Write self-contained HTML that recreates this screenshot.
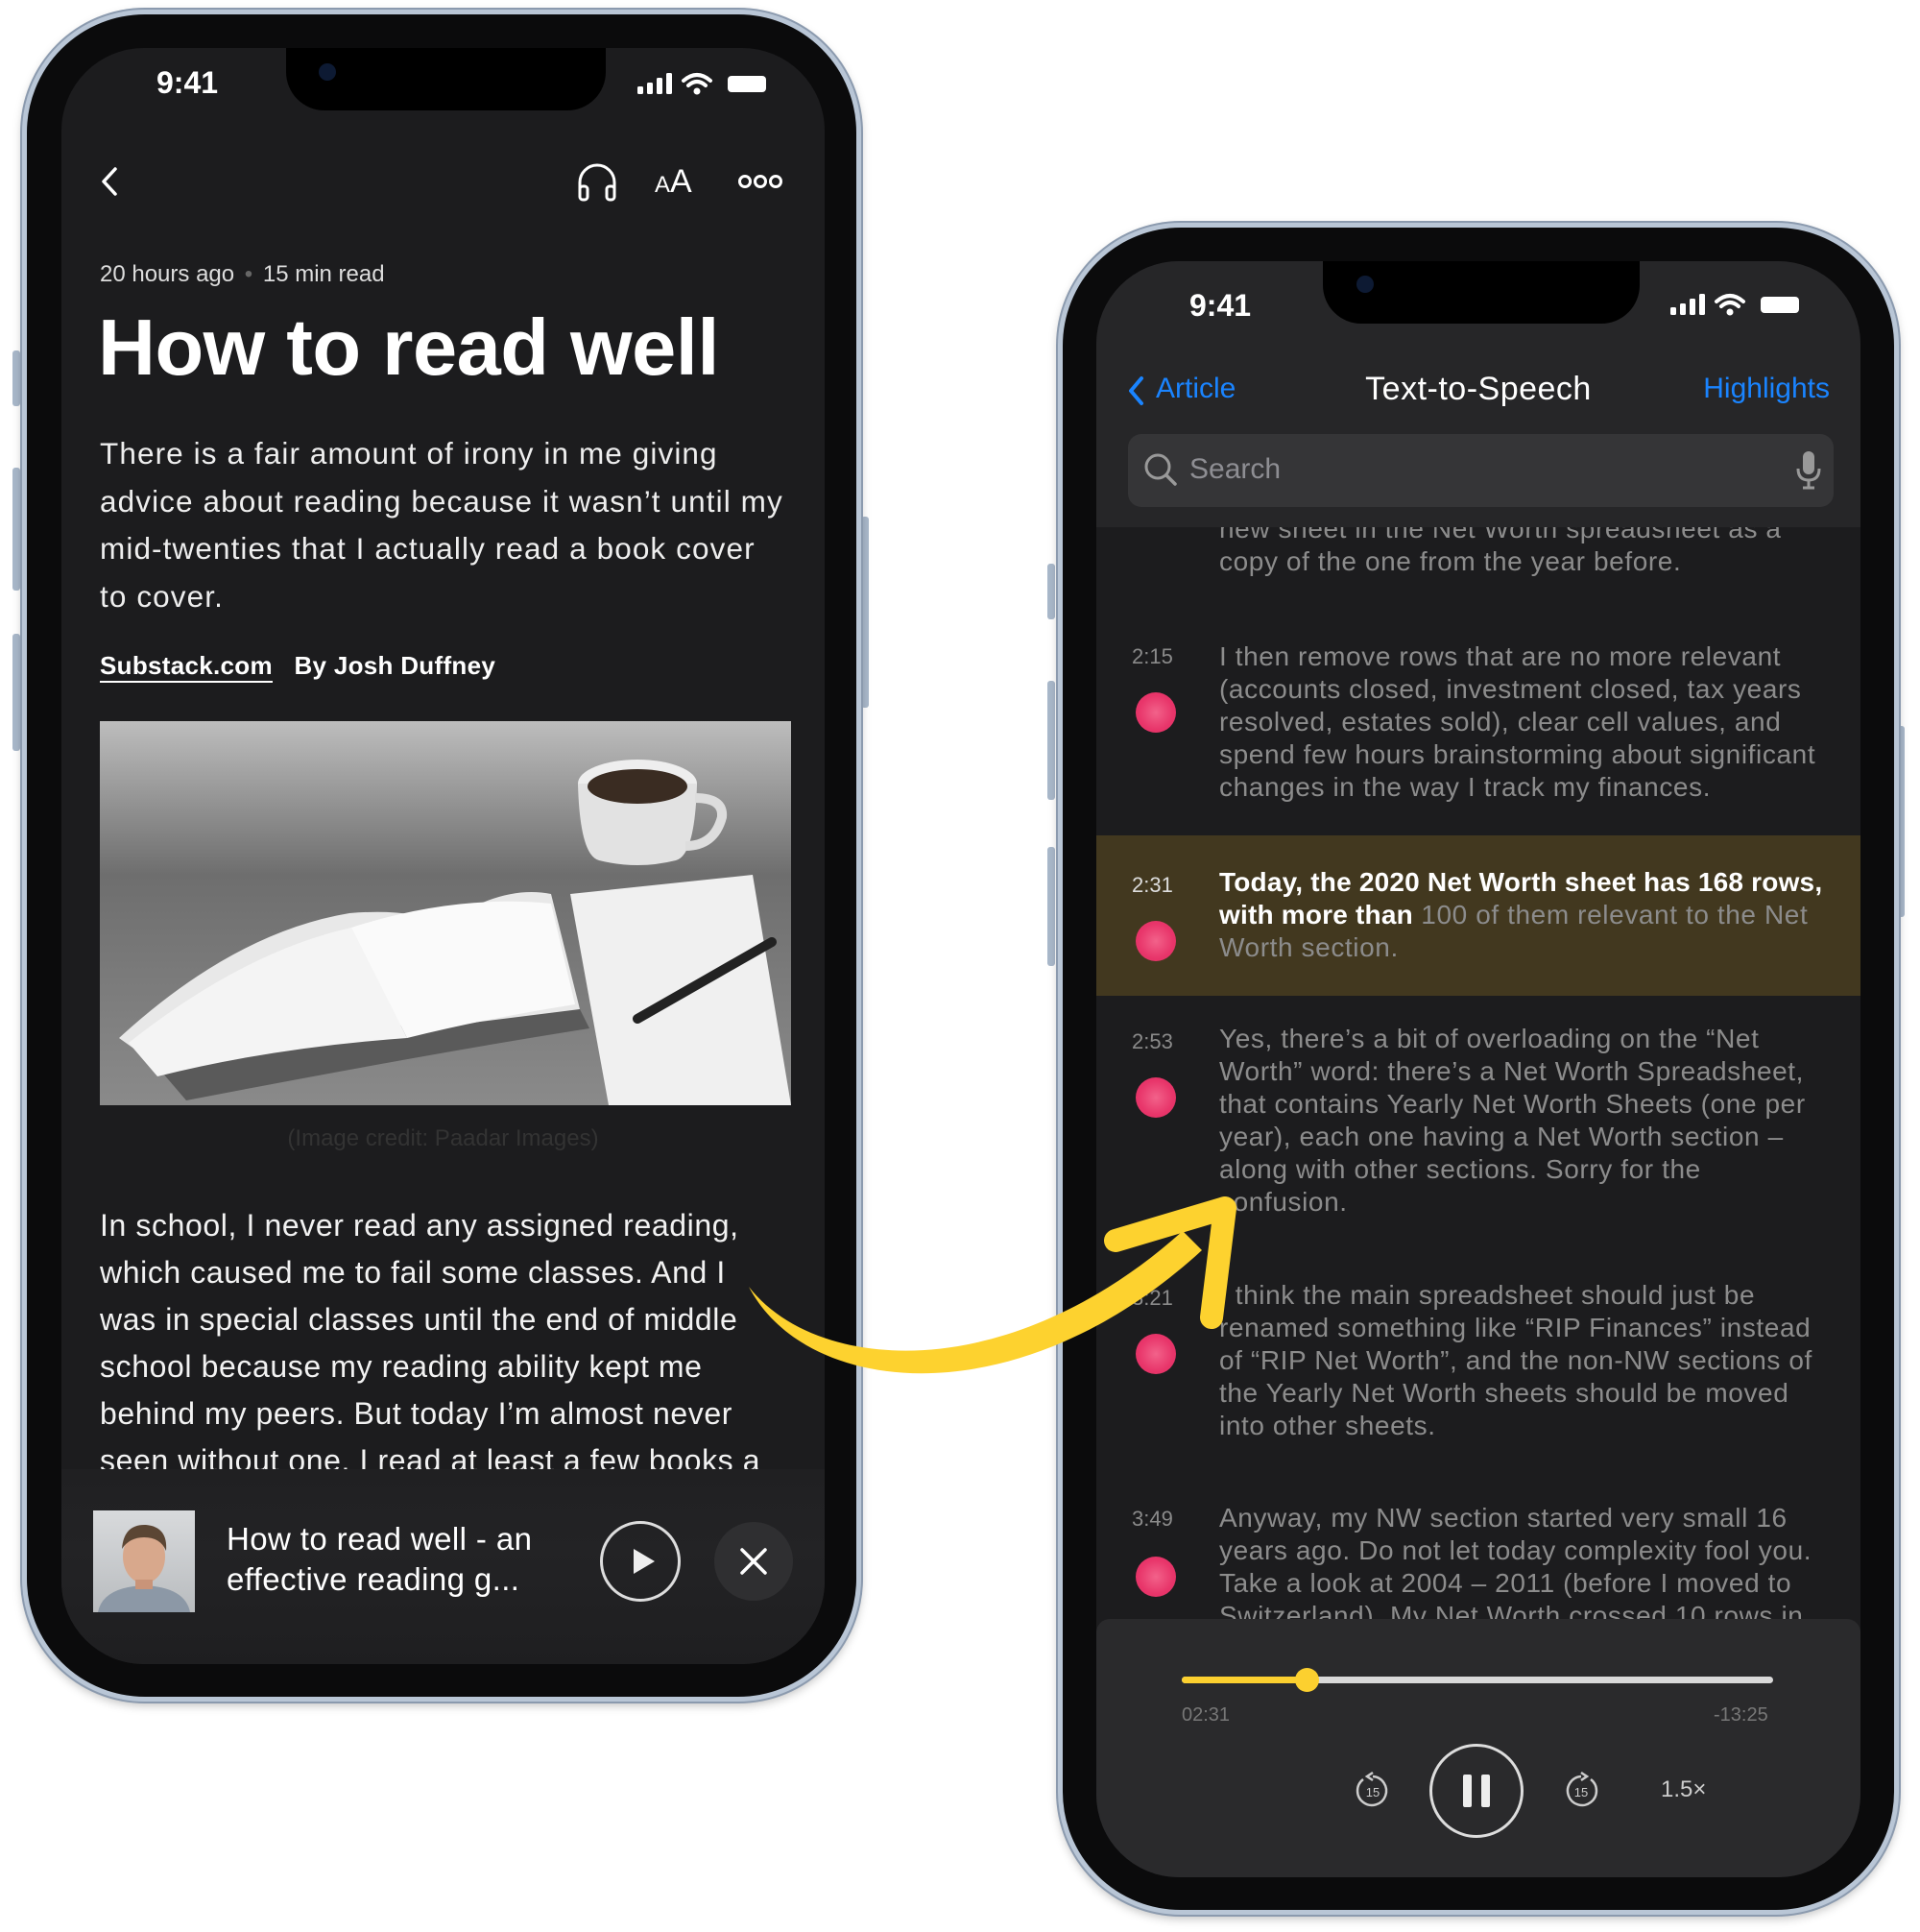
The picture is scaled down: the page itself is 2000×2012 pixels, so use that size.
<!DOCTYPE html>
<html><head><meta charset="utf-8"><style>
*{margin:0;padding:0;box-sizing:border-box}
body{width:2000px;height:2012px;background:#fff;position:relative;overflow:hidden;font-family:"Liberation Sans",sans-serif}
.abs{position:absolute}
.phone{position:absolute;border-radius:128px;background:#0b0b0c;border:5px solid #b9c6d6;box-shadow:0 0 0 2px #8b9aae,0 4px 10px rgba(0,0,0,.25)}
.screen{position:absolute;border-radius:86px;overflow:hidden;background:#1c1c1e}
.btn{position:absolute;width:8px;background:#a9b8ca;border-radius:3px}
.l{position:absolute;white-space:nowrap}
.dot{position:absolute;width:42px;height:42px;border-radius:50%;background:radial-gradient(circle,#f2628a 0,#e8356a 60%,#e02e63 100%)}
.ts{position:absolute;font-size:22px;color:#8a8a8a}
.rt{position:absolute;font-size:28px;letter-spacing:0.6px;color:#8c8c8c;line-height:34px;white-space:nowrap}
</style></head><body>

<!-- LEFT PHONE -->
<div class="btn" style="left:13px;top:365px;height:58px"></div>
<div class="btn" style="left:13px;top:487px;height:128px"></div>
<div class="btn" style="left:13px;top:660px;height:122px"></div>
<div class="btn" style="left:897px;top:538px;height:199px"></div>
<div class="phone" style="left:23px;top:10px;width:874px;height:1762px"></div>
<div class="screen" style="left:64px;top:50px;width:795px;height:1683px">
  <div class="abs" style="left:234px;top:-10px;width:333px;height:75px;background:#000;border-radius:0 0 40px 40px"></div>
  <div class="abs" style="left:268px;top:16px;width:18px;height:18px;border-radius:50%;background:#0d1a33"></div>
  <div class="l" style="left:99px;top:18px;font-size:32px;font-weight:bold;color:#fff">9:41</div>
  <svg class="abs" style="left:598px;top:24px" width="140" height="28" viewBox="0 0 140 28">
    <rect x="2" y="16" width="6" height="8" rx="1.5" fill="#fff"/><rect x="12" y="12" width="6" height="12" rx="1.5" fill="#fff"/><rect x="22" y="7" width="6" height="17" rx="1.5" fill="#fff"/><rect x="32" y="2" width="6" height="22" rx="1.5" fill="#fff"/>
    <path d="M50 10 Q64 -2 78 10" stroke="#fff" stroke-width="4" fill="none" stroke-linecap="round"/><path d="M55 15 Q64 7 73 15" stroke="#fff" stroke-width="4" fill="none" stroke-linecap="round"/><circle cx="64" cy="21" r="3.5" fill="#fff"/>
    <rect x="96" y="5" width="40" height="17" rx="4" fill="#fff"/>
  </svg>
  <svg class="abs" style="left:36px;top:120px" width="30" height="40"><path d="M20 6 L8 19 L20 32" stroke="#fff" stroke-width="3.5" fill="none" stroke-linecap="round" stroke-linejoin="round"/></svg>
  <svg class="abs" style="left:536px;top:120px" width="44" height="42" viewBox="0 0 44 42"><path d="M4 30 V20 A18 18 0 0 1 40 20 V30" stroke="#fff" stroke-width="3" fill="none"/><rect x="4" y="24" width="8" height="14" rx="3" stroke="#fff" stroke-width="3" fill="none"/><rect x="32" y="24" width="8" height="14" rx="3" stroke="#fff" stroke-width="3" fill="none"/></svg>
  <div class="l" style="left:618px;top:120px;color:#fff;font-size:24px">A<span style="font-size:34px">A</span></div>
  <svg class="abs" style="left:704px;top:130px" width="48" height="18"><circle cx="8" cy="9" r="5.5" stroke="#fff" stroke-width="3" fill="none"/><circle cx="24" cy="9" r="5.5" stroke="#fff" stroke-width="3" fill="none"/><circle cx="40" cy="9" r="5.5" stroke="#fff" stroke-width="3" fill="none"/></svg>
  <div class="abs" style="left:0;top:0;width:795px;height:1480px;overflow:hidden">
    <div class="l" style="left:40px;top:222px;font-size:24px;color:#ddd">20 hours ago <span style="color:#666;margin:0 4px">•</span> 15 min read</div>
    <div class="l" style="left:38px;top:264px;font-size:83px;font-weight:bold;color:#fff;letter-spacing:-0.5px">How to read well</div>
    <div style="position:absolute;left:40px;top:398px;font-size:31.5px;letter-spacing:1.1px;line-height:49.5px;color:#eee">
      <div class="l" style="position:static">There is a fair amount of irony in me giving</div>
      <div class="l" style="position:static">advice about reading because it wasn’t until my</div>
      <div class="l" style="position:static">mid-twenties that I actually read a book cover</div>
      <div class="l" style="position:static">to cover.</div>
    </div>
    <div class="l" style="left:40px;top:628px;font-size:26px;font-weight:bold;color:#fff;letter-spacing:0.3px"><span style="border-bottom:2px solid #fff;padding-bottom:1px">Substack.com</span>&nbsp;&nbsp;&nbsp;By Josh Duffney</div>
    <svg class="abs" style="left:40px;top:701px" width="720" height="400" viewBox="0 0 720 400">
      <defs><linearGradient id="g1" x1="0" y1="0" x2="0" y2="1"><stop offset="0" stop-color="#bdbdbd"/><stop offset=".4" stop-color="#6e6e6e"/><stop offset="1" stop-color="#8a8a8a"/></linearGradient></defs>
      <rect width="720" height="400" fill="url(#g1)"/>
      <path d="M20 330 Q140 220 260 200 Q320 195 360 210 Q420 170 470 180 L500 300 Q420 330 320 345 Q200 360 90 380 Z" fill="#e8e8e8"/>
      <path d="M60 360 Q200 300 340 320 L500 300 L510 320 Q350 345 90 395 Z" fill="#5a5a5a"/>
      <path d="M30 335 Q150 240 262 215 L320 330 Q180 340 60 370 Z" fill="#f4f4f4"/>
      <path d="M262 215 Q370 180 470 190 L495 295 Q400 310 320 330 Z" fill="#fafafa"/>
      <path d="M490 180 L680 160 L720 400 L530 400 Z" fill="#f0f0f0"/>
      <path d="M560 310 L700 230" stroke="#222" stroke-width="10" stroke-linecap="round"/>
      <ellipse cx="560" cy="65" rx="62" ry="25" fill="#eee"/>
      <path d="M498 65 Q500 140 520 145 Q560 155 600 145 Q620 140 622 65 Z" fill="#e2e2e2"/>
      <ellipse cx="560" cy="68" rx="52" ry="18" fill="#3a2c22"/>
      <path d="M620 80 Q650 80 648 100 Q640 130 610 130" stroke="#ddd" stroke-width="10" fill="none"/>
    </svg>
    <div class="l" style="left:0;width:795px;text-align:center;top:1122px;font-size:24px;color:#333">(Image credit: Paadar Images)</div>
    <div style="position:absolute;left:40px;top:1202px;font-size:32px;letter-spacing:0.6px;line-height:49px;color:#f2f2f2">
      <div class="l" style="position:static">In school, I never read any assigned reading,</div>
      <div class="l" style="position:static">which caused me to fail some classes. And I</div>
      <div class="l" style="position:static">was in special classes until the end of middle</div>
      <div class="l" style="position:static">school because my reading ability kept me</div>
      <div class="l" style="position:static">behind my peers. But today I’m almost never</div>
      <div class="l" style="position:static">seen without one. I read at least a few books a</div>
    </div>
  </div>
  <div class="abs" style="left:0;top:1480px;width:795px;height:210px;background:linear-gradient(#202022,#232325 40%,#1e1e20)"></div>
  <div class="abs" style="left:33px;top:1523px;width:106px;height:106px;background:linear-gradient(#d8dadc,#b9bcbf)">
    <svg width="106" height="106" viewBox="0 0 106 106"><path d="M5 106 Q10 80 53 78 Q96 80 101 106 Z" fill="#8c98a6"/><ellipse cx="53" cy="48" rx="22" ry="28" fill="#d8a88c"/><path d="M30 40 Q32 14 55 15 Q78 17 76 42 Q70 28 53 28 Q38 28 30 40Z" fill="#5b4634"/><rect x="44" y="72" width="18" height="10" fill="#c99479"/></svg>
  </div>
  <div class="l" style="left:172px;top:1532px;font-size:33px;letter-spacing:0.4px;line-height:42px;color:#fff">How to read well - an<br>effective reading g...</div>
  <div class="abs" style="left:561px;top:1534px;width:84px;height:84px;border:3px solid #ddd;border-radius:50%"></div>
  <svg class="abs" style="left:592px;top:1561px" width="30" height="30"><path d="M4 2 L26 15 L4 28 Z" fill="#eee"/></svg>
  <div class="abs" style="left:680px;top:1535px;width:82px;height:82px;background:#2f2f31;border-radius:50%"></div>
  <svg class="abs" style="left:705px;top:1560px" width="32" height="32"><path d="M4 4 L28 28 M28 4 L4 28" stroke="#fff" stroke-width="3.5" stroke-linecap="round"/></svg>
</div>

<!-- RIGHT PHONE -->
<div class="btn" style="left:1091px;top:587px;height:58px"></div>
<div class="btn" style="left:1091px;top:709px;height:124px"></div>
<div class="btn" style="left:1091px;top:882px;height:124px"></div>
<div class="btn" style="left:1976px;top:756px;height:199px"></div>
<div class="phone" style="left:1102px;top:232px;width:876px;height:1762px"></div>
<div class="screen" style="left:1142px;top:272px;width:796px;height:1683px;background:#1c1c1e">
  <div class="abs" style="left:0;top:0;width:796px;height:277px;background:#262628"></div>
  <div class="abs" style="left:236px;top:-10px;width:330px;height:75px;background:#000;border-radius:0 0 40px 40px"></div>
  <div class="abs" style="left:271px;top:15px;width:18px;height:18px;border-radius:50%;background:#0d1a33"></div>
  <div class="l" style="left:97px;top:28px;font-size:32px;font-weight:bold;color:#fff">9:41</div>
  <svg class="abs" style="left:596px;top:32px" width="140" height="28" viewBox="0 0 140 28">
    <rect x="2" y="16" width="6" height="8" rx="1.5" fill="#fff"/><rect x="12" y="12" width="6" height="12" rx="1.5" fill="#fff"/><rect x="22" y="7" width="6" height="17" rx="1.5" fill="#fff"/><rect x="32" y="2" width="6" height="22" rx="1.5" fill="#fff"/>
    <path d="M50 10 Q64 -2 78 10" stroke="#fff" stroke-width="4" fill="none" stroke-linecap="round"/><path d="M55 15 Q64 7 73 15" stroke="#fff" stroke-width="4" fill="none" stroke-linecap="round"/><circle cx="64" cy="21" r="3.5" fill="#fff"/>
    <rect x="96" y="5" width="40" height="17" rx="4" fill="#fff"/>
  </svg>
  <svg class="abs" style="left:30px;top:118px" width="24" height="34"><path d="M17 4 L6 17 L17 30" stroke="#1a84ff" stroke-width="4" fill="none" stroke-linecap="round" stroke-linejoin="round"/></svg>
  <div class="l" style="left:62px;top:116px;font-size:30px;color:#1a84ff">Article</div>
  <div class="l" style="left:0;width:796px;text-align:center;top:114px;font-size:34px;letter-spacing:0.5px;color:#fff">Text-to-Speech</div>
  <div class="l" style="right:32px;top:116px;font-size:30px;color:#1a84ff">Highlights</div>
  <div class="abs" style="left:33px;top:180px;width:735px;height:76px;background:#353537;border-radius:14px"></div>
  <svg class="abs" style="left:48px;top:198px" width="40" height="40"><circle cx="16" cy="16" r="12" stroke="#999" stroke-width="3" fill="none"/><path d="M25 25 L34 34" stroke="#999" stroke-width="3.5" stroke-linecap="round"/></svg>
  <div class="l" style="left:97px;top:200px;font-size:30px;color:#8e8e93">Search</div>
  <svg class="abs" style="left:727px;top:196px" width="30" height="44"><rect x="9" y="2" width="12" height="24" rx="6" fill="#999"/><path d="M4 20 Q4 32 15 32 Q26 32 26 20 M15 32 V40 M9 40 H21" stroke="#999" stroke-width="3" fill="none"/></svg>
  <div class="abs" style="left:0;top:277px;width:796px;height:1137px;overflow:hidden">
    <div class="abs" style="left:0;top:321px;width:796px;height:167px;background:#42381f"></div>
    <div class="rt" style="left:128px;top:-15px">new sheet in the Net Worth spreadsheet as a<br>copy of the one from the year before.</div>

    <div class="ts" style="left:37px;top:122px">2:15</div><div class="dot" style="left:41px;top:172px"></div>
    <div class="rt" style="left:128px;top:118px">I then remove rows that are no more relevant<br>(accounts closed, investment closed, tax years<br>resolved, estates sold), clear cell values, and<br>spend few hours brainstorming about significant<br>changes in the way I track my finances.</div>

    <div class="ts" style="left:37px;top:360px;color:#ddd">2:31</div><div class="dot" style="left:41px;top:410px"></div>
    <div class="rt" style="left:128px;top:353px"><b style="color:#fff;letter-spacing:0.2px">Today, the 2020 Net Worth sheet has 168 rows,<br>with more than</b> 100 of them relevant to the Net<br>Worth section.</div>

    <div class="ts" style="left:37px;top:523px">2:53</div><div class="dot" style="left:41px;top:573px"></div>
    <div class="rt" style="left:128px;top:516px">Yes, there’s a bit of overloading on the “Net<br>Worth” word: there’s a Net Worth Spreadsheet,<br>that contains Yearly Net Worth Sheets (one per<br>year), each one having a Net Worth section –<br>along with other sections. Sorry for the<br>confusion.</div>

    <div class="ts" style="left:37px;top:790px">3:21</div><div class="dot" style="left:41px;top:840px"></div>
    <div class="rt" style="left:128px;top:783px">I think the main spreadsheet should just be<br>renamed something like “RIP Finances” instead<br>of “RIP Net Worth”, and the non-NW sections of<br>the Yearly Net Worth sheets should be moved<br>into other sheets.</div>

    <div class="ts" style="left:37px;top:1020px">3:49</div><div class="dot" style="left:41px;top:1072px"></div>
    <div class="rt" style="left:128px;top:1015px">Anyway, my NW section started very small 16<br>years ago. Do not let today complexity fool you.<br>Take a look at 2004 – 2011 (before I moved to<br>Switzerland). My Net Worth crossed 10 rows in</div>
  </div>
  <div class="abs" style="left:0;top:1414px;width:796px;height:280px;background:#2a2a2c;border-radius:14px 14px 0 0"></div>
  <div class="abs" style="left:89px;top:1474px;width:616px;height:7px;background:#d9d9d9;border-radius:4px"></div>
  <div class="abs" style="left:89px;top:1474px;width:130px;height:7px;background:#fcd02f;border-radius:4px"></div>
  <div class="abs" style="left:207px;top:1465px;width:25px;height:25px;background:#fcd02f;border-radius:50%"></div>
  <div class="l" style="left:89px;top:1503px;font-size:20px;color:#777">02:31</div>
  <div class="l" style="left:643px;top:1503px;font-size:20px;color:#777">-13:25</div>
  <svg class="abs" style="left:268px;top:1573px" width="40" height="40" viewBox="0 0 40 40"><path d="M10 8 A15 15 0 1 0 20 5" stroke="#ccc" stroke-width="2.5" fill="none"/><path d="M20 1 L14 5 L20 9" stroke="#ccc" stroke-width="2.5" fill="none"/><text x="20" y="26" font-size="13" fill="#ccc" text-anchor="middle" font-family="Liberation Sans">15</text></svg>
  <div class="abs" style="left:347px;top:1544px;width:98px;height:98px;border:3px solid #ddd;border-radius:50%"></div>
  <div class="abs" style="left:382px;top:1576px;width:9px;height:34px;background:#eee;border-radius:2px"></div>
  <div class="abs" style="left:401px;top:1576px;width:9px;height:34px;background:#eee;border-radius:2px"></div>
  <svg class="abs" style="left:485px;top:1573px" width="40" height="40" viewBox="0 0 40 40"><path d="M30 8 A15 15 0 1 1 20 5" stroke="#ccc" stroke-width="2.5" fill="none"/><path d="M20 1 L26 5 L20 9" stroke="#ccc" stroke-width="2.5" fill="none"/><text x="20" y="26" font-size="13" fill="#ccc" text-anchor="middle" font-family="Liberation Sans">15</text></svg>
  <div class="l" style="left:588px;top:1578px;font-size:24px;color:#ccc">1.5×</div>
</div>

<svg class="abs" style="left:0;top:0" width="2000" height="2012">
  <path d="M780 1340 C 850 1430 1050 1445 1232 1282 L1252 1302 C 1060 1478 840 1455 780 1340 Z" fill="#fdd22f"/>
  <path d="M1162 1292 L1276 1258 L1262 1372" stroke="#fdd22f" stroke-width="24" fill="none" stroke-linecap="round" stroke-linejoin="round"/>
</svg>
</body></html>
